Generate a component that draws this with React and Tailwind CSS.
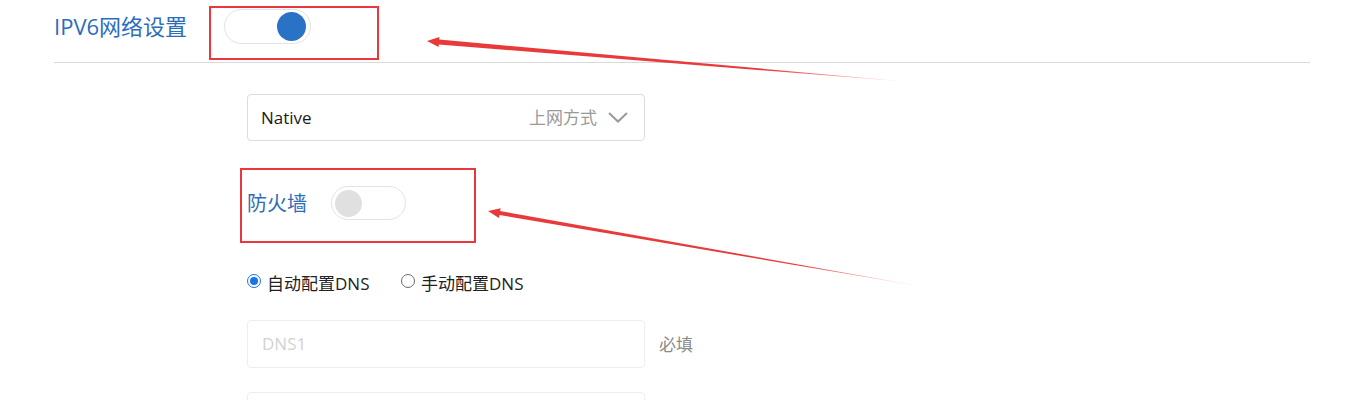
import React from "react";

const Toggle = ({ on, className = "" }) => (
  <div
    className={`flex items-center rounded-full border border-[#e3e3e3] bg-white ${
      on ? "justify-end pr-[4px]" : "justify-start pl-[3px]"
    } ${className}`}
  >
    <div
      className={`rounded-full ${on ? "w-[29px] h-[29px] bg-[#2a72c6]" : "w-[27px] h-[27px] bg-[#e0e0e0]"}`}
    />
  </div>
);

const Radio = ({ checked, label, className = "" }) => (
  <label className={`flex items-center ${className}`}>
    {checked ? (
      <span className="w-[14px] h-[14px] rounded-full border border-[#1a73e8] flex items-center justify-center -mt-[4px]">
        <span className="w-[8px] h-[8px] rounded-full bg-[#1a73e8]" />
      </span>
    ) : (
      <span className="w-[14px] h-[14px] rounded-full border border-[#6e6e6e] -mt-[4px]" />
    )}
    <span className="ml-[6px] mt-[2px] text-[17px] text-[#222]">{label}</span>
  </label>
);

const App = () => {
  return (
    <div className="relative w-[1372px] h-[400px] overflow-hidden bg-white font-['Open_Sans','Noto_Sans_CJK_SC',sans-serif]">
      {/* --- HEADER --- */}
      <div className="ml-[54px] w-[1256px]">
        <div className="flex items-center h-[54px]">
          <h1 className="w-[170px] -mt-[3px] text-[22px] text-[#2c6dba] leading-none">IPV6网络设置</h1>
          <Toggle on className="w-[87px] h-[35px] -mt-[1px]" />
        </div>
        <div className="mt-[8px] h-px bg-[#d9d9d9]" />
      </div>

      {/* --- FORM --- */}
      <div className="ml-[247px]">
        <div className="mt-[31px] w-[398px] h-[47px] border border-[#dcdcdc] rounded-[4px] flex items-center pl-[13px] pr-[16px]">
          <span className="text-[17px] text-[#1a1a1a]">Native</span>
          <span className="ml-auto text-[17px] text-[#9a9a9a]">上网方式</span>
          <svg className="ml-[11px]" width="20" height="11" viewBox="0 0 20 11">
            <polyline points="1,1 10,9.5 19,1" fill="none" stroke="#9a9a9a" strokeWidth="2" />
          </svg>
        </div>

        <div className="mt-[45px] h-[34px] flex items-center">
          <span className="w-[84px] mt-[1px] text-[20px] text-[#2f6db5]">防火墙</span>
          <Toggle className="w-[75px] h-[34px]" />
        </div>

        <div className="mt-[52px] h-[22px] flex items-center">
          <Radio checked label="自动配置DNS" className="w-[154px]" />
          <Radio label="手动配置DNS" />
        </div>

        <div className="mt-[26px] flex items-center">
          <div className="w-[398px] h-[48px] border border-[#eeeeee] rounded-[4px] flex items-center pl-[14px]">
            <span className="text-[17px] text-[#d2d2d2]">DNS1</span>
          </div>
          <span className="ml-[14px] mt-[2px] text-[17px] text-[#8a8a8a]">必填</span>
        </div>

        <div className="mt-[24px] w-[398px] h-[48px] border border-[#eeeeee] rounded-[4px]" />
      </div>

      {/* --- ANNOTATIONS --- */}
      <div className="absolute left-[209px] top-[6px] w-[170px] h-[54px] border-2 border-[#e8383d]" />
      <div className="absolute left-[240px] top-[168px] w-[236px] h-[75px] border-2 border-[#e8383d]" />
      <svg className="absolute left-0 top-0" width="1372" height="400" viewBox="0 0 1372 400">
        <defs>
          <linearGradient id="fade1" x1="427" y1="0" x2="910" y2="0" gradientUnits="userSpaceOnUse">
            <stop offset="0.7" stopColor="#e83a3a" />
            <stop offset="1" stopColor="#e83a3a" stopOpacity="0.1" />
          </linearGradient>
          <linearGradient id="fade2" x1="488" y1="0" x2="925" y2="0" gradientUnits="userSpaceOnUse">
            <stop offset="0.7" stopColor="#e83a3a" />
            <stop offset="1" stopColor="#e83a3a" stopOpacity="0.1" />
          </linearGradient>
        </defs>
        <polygon
          points="427,41 439.4,37 439.2,39.5 910,82 438.8,44.5 438.6,47"
          fill="url(#fade1)"
        />
        <polygon
          points="488,211 500.7,208.2 500.1,211.1 925,287 499.5,215.1 498.9,218"
          fill="url(#fade2)"
        />
      </svg>
    </div>
  );
};

export default App;
